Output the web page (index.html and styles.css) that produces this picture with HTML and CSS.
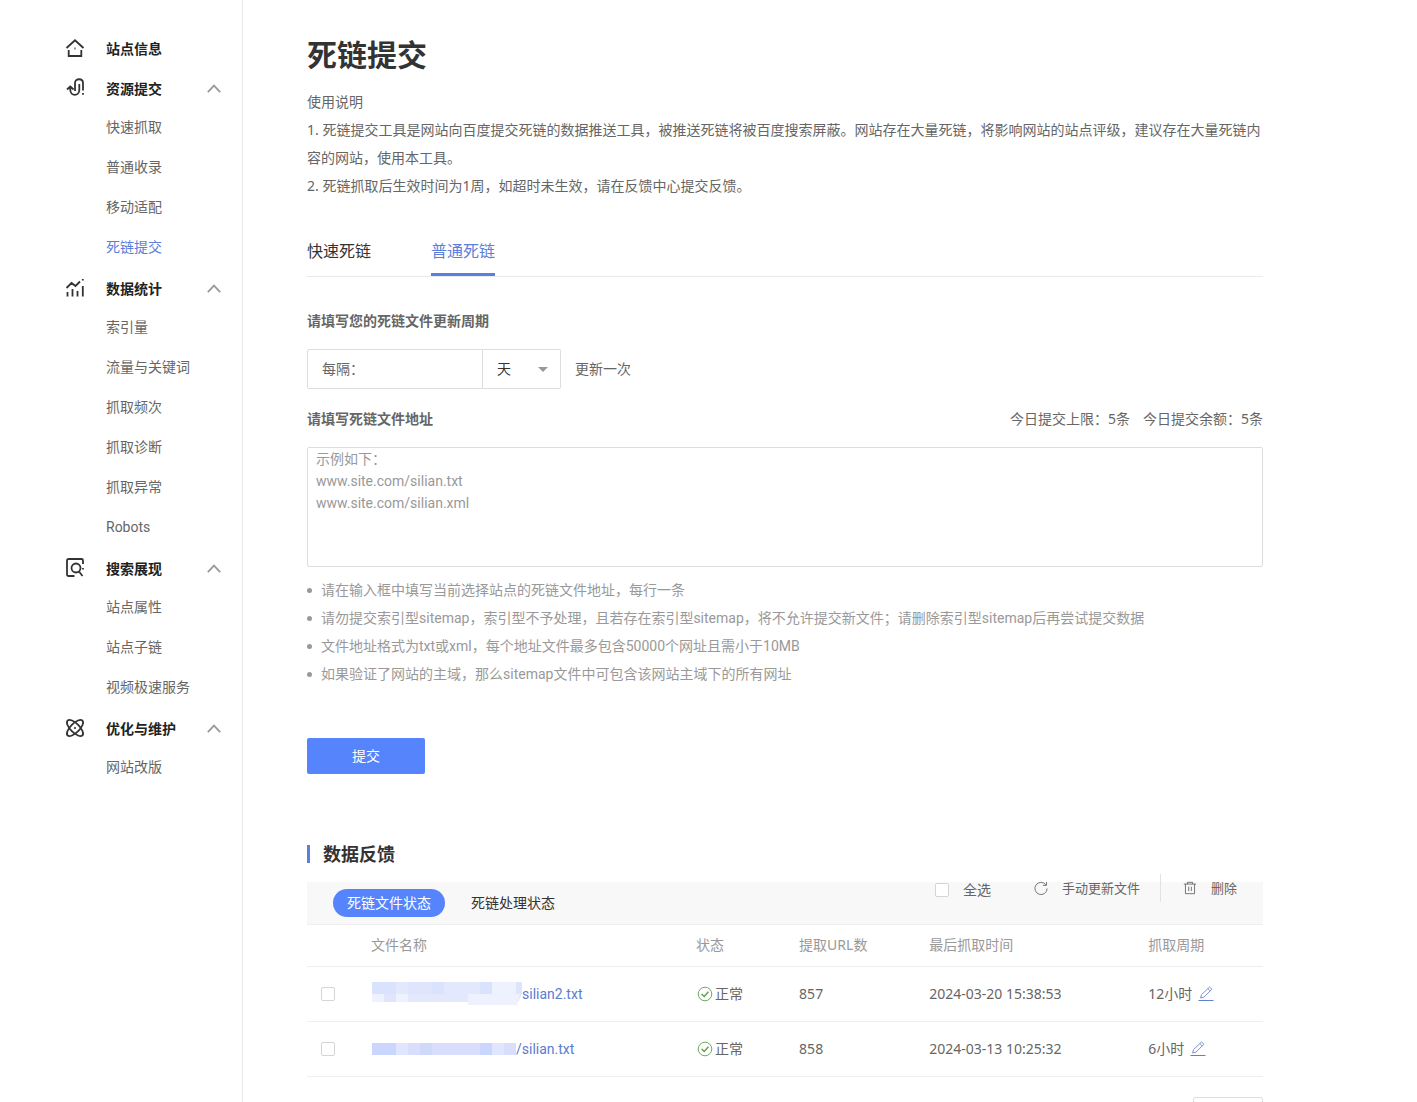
FILE: index.html
```html
<!DOCTYPE html>
<html lang="zh-CN">
<head>
<meta charset="utf-8">
<meta name="viewport" content="width=device-width, initial-scale=1">
<title>死链提交</title>
<link rel="stylesheet" href="styles.css">
</head>
<body>
<svg class="sprite" aria-hidden="true">
  <symbol id="chevron" viewBox="0 0 14 9"><path d="M.8 8.2 7 1.6l6.2 6.6" fill="none" stroke="#999" stroke-width="1.8"/></symbol>
  <symbol id="check" viewBox="0 0 16 16"><circle cx="8" cy="8" r="6.8" fill="none" stroke="#6bab5e"/><path d="m4.6 8 2.6 2.4 4.2-4.6" fill="none" stroke="#5c9d50" stroke-width="1.4"/></symbol>
  <symbol id="pencil" viewBox="0 0 16 16"><path d="M.5 14.5h15" stroke="#5f7fd4" fill="none"/><path d="m2.600 12 .9-3.400L11.500 1l2.400 2.200L6 11.100zM9.800 2.600l2.400 2.300" stroke="#7f93d6" fill="none"/></symbol>
</svg>
<div class="app">
  <nav class="sidebar" aria-label="站点管理">
    <a class="group" href="#">
      <svg class="group-icon" viewBox="0 0 20 20"><path d="M1.500 10 10 2.300l8.500 7.700M3.700 12v6h12.600v-6"/><path d="M9.500 10.500h1"/></svg>
      <span>站点信息</span>
    </a>
    <a class="group" href="#">
      <svg class="group-icon" viewBox="0 0 20 20"><path d="m2 11.500 3.300-3 3.300 3M5.300 9v3c0 6.500 9 6.500 9 0V6"/><path d="M10 13V5c0-5 8-5 8 0v7.500M18 15v1.800"/></svg>
      <span>资源提交</span>
      <svg class="chevron"><use href="#chevron"/></svg>
    </a>
    <a class="item" href="#">快速抓取</a>
    <a class="item" href="#">普通收录</a>
    <a class="item" href="#">移动适配</a>
    <a class="item current" href="#">死链提交</a>
    <a class="group" href="#">
      <svg class="group-icon" viewBox="0 0 20 20"><path d="m1.500 10 5-5 4 3L15 3.500M2.500 14v4.500M7.500 11v7.500M12.500 13v5.500M17.800 8v10.500M17.800 1v1.500"/></svg>
      <span>数据统计</span>
      <svg class="chevron"><use href="#chevron"/></svg>
    </a>
    <a class="item" href="#">索引量</a>
    <a class="item" href="#">流量与关键词</a>
    <a class="item" href="#">抓取频次</a>
    <a class="item" href="#">抓取诊断</a>
    <a class="item" href="#">抓取异常</a>
    <a class="item" href="#">Robots</a>
    <a class="group" href="#">
      <svg class="group-icon" viewBox="0 0 20 20"><path d="M9.500 18h-6a1.500 1.500 0 0 1-1.500-1.500v-14A1.500 1.500 0 0 1 3.500 1h13A1.500 1.500 0 0 1 18 2.500V6M18 10v1.500"/><circle cx="11" cy="10" r="4.500"/><path d="M14 13.500 17.500 18"/></svg>
      <span>搜索展现</span>
      <svg class="chevron"><use href="#chevron"/></svg>
    </a>
    <a class="item" href="#">站点属性</a>
    <a class="item" href="#">站点子链</a>
    <a class="item" href="#">视频极速服务</a>
    <a class="group" href="#">
      <svg class="group-icon" viewBox="0 0 20 20"><ellipse cx="10" cy="10" rx="10.500" ry="4.500" transform="rotate(45 10 10)"/><ellipse cx="10" cy="10" rx="10.500" ry="4.500" transform="rotate(-45 10 10)"/><path d="M9.200 10h1.600"/></svg>
      <span>优化与维护</span>
      <svg class="chevron"><use href="#chevron"/></svg>
    </a>
    <a class="item" href="#">网站改版</a>
  </nav>

  <main class="content">
    <h1>死链提交</h1>
    <div class="intro">
      <p>使用说明</p>
      <p>1. 死链提交工具是网站向百度提交死链的数据推送工具，被推送死链将被百度搜索屏蔽。网站存在大量死链，将影响网站的站点评级，建议存在大量死链内容的网站，使用本工具。</p>
      <p>2. 死链抓取后生效时间为1周，如超时未生效，请在反馈中心提交反馈。</p>
    </div>

    <div class="tabs">
      <button class="tab" type="button">快速死链</button>
      <button class="tab active" type="button">普通死链</button>
    </div>

    <form>
      <h2 class="field-title">请填写您的死链文件更新周期</h2>
      <div class="period">
        <div class="period-input"><label for="days">每隔：</label><input id="days" type="text"></div>
        <div class="period-unit">
          <select aria-label="周期单位"><option>天</option></select>
        </div>
        <span class="period-note">更新一次</span>
      </div>
      <div class="field-head">
        <label class="field-title" for="urls">请填写死链文件地址</label>
        <div class="quota"><span>今日提交上限：5条</span><span>今日提交余额：5条</span></div>
      </div>
      <textarea id="urls" placeholder="示例如下：&#10;www.site.com/silian.txt&#10;www.site.com/silian.xml"></textarea>
      <ul class="tips">
        <li>请在输入框中填写当前选择站点的死链文件地址，每行一条</li>
        <li>请勿提交索引型sitemap，索引型不予处理，且若存在索引型sitemap，将不允许提交新文件；请删除索引型sitemap后再尝试提交数据</li>
        <li>文件地址格式为txt或xml，每个地址文件最多包含50000个网址且需小于10MB</li>
        <li>如果验证了网站的主域，那么sitemap文件中可包含该网站主域下的所有网址</li>
      </ul>
      <button class="submit" type="button">提交</button>
    </form>

    <h2 class="section-title">数据反馈</h2>
    <div class="toolbar">
      <button class="pill active" type="button">死链文件状态</button>
      <button class="pill" type="button">死链处理状态</button>
      <div class="actions">
        <label class="select-all"><input type="checkbox">全选</label>
        <button class="action refresh" type="button">
          <svg viewBox="0 0 16 16"><path d="M13.600 4.300A7 7 0 1 0 15 8.600M14.300 1v4h-4"/></svg>手动更新文件
        </button>
        <button class="action remove" type="button">
          <svg viewBox="0 0 16 16"><path d="M1 3.500h14M5 3.500v-2h6v2M2.800 3.500v11h10.400v-11M6.500 6.500v5M9.500 6.500v5"/></svg>删除
        </button>
      </div>
    </div>
    <table>
      <colgroup><col class="c-pick"><col class="c-name"><col class="c-state"><col class="c-count"><col class="c-time"><col class="c-cycle"></colgroup>
      <thead>
        <tr><th></th><th>文件名称</th><th>状态</th><th>提取URL数</th><th>最后抓取时间</th><th>抓取周期</th></tr>
      </thead>
      <tbody>
        <tr>
          <td><input type="checkbox" aria-label="选择 silian2.txt"></td>
          <td><a class="file" href="#"><svg class="mask" width="150" height="24" viewBox="0 0 150 24" shape-rendering="crispEdges"><path fill="#e4e8fc" d="M0 0h150v12l-4 8H0z"/><path fill="#d9e3fd" d="M0 0h24v12H0zM108 0h12v12h-12zM60 0h12v12H60z"/><path fill="#e1e4fd" d="M36 0h24v12H36z"/><path fill="#eef1fe" d="M0 12h12v8H0zM24 12h12v8H24zM120 0h24v12h-24zM96 12h52l-3 11H96z"/><path fill="#dfe5fb" d="M12 12h12v8H12zM144 0h6v12h-6z"/></svg>silian2.txt</a></td>
          <td><span class="state"><svg><use href="#check"/></svg>正常</span></td>
          <td>857</td>
          <td>2024-03-20 15:38:53</td>
          <td><span class="cycle">12小时<button type="button" aria-label="编辑"><svg><use href="#pencil"/></svg></button></span></td>
        </tr>
        <tr>
          <td><input type="checkbox" aria-label="选择 silian.txt"></td>
          <td><a class="file" href="#"><svg class="mask" width="144" height="12" viewBox="0 0 144 12" shape-rendering="crispEdges"><path fill="#d8defc" d="M0 0h144v12H0z"/><path fill="#cbd6fe" d="M0 0h24v12H0zM108 0h12v12h-12z"/><path fill="#dfe6fd" d="M24 0h12v12H24zM120 0h12v12h-12z"/><path fill="#d0d9fa" d="M48 0h12v12H48z"/></svg>/silian.txt</a></td>
          <td><span class="state"><svg><use href="#check"/></svg>正常</span></td>
          <td>858</td>
          <td>2024-03-13 10:25:32</td>
          <td><span class="cycle">6小时<button type="button" aria-label="编辑"><svg><use href="#pencil"/></svg></button></span></td>
        </tr>
      </tbody>
    </table>
    <div class="pager"><select aria-label="每页条数"><option></option></select></div>
  </main>
</div>
</body>
</html>
```
FILE: styles.css
```css
* { box-sizing: border-box; }

body {
  margin: 0;
  background: #fff;
  color: #666;
  font: 14px/28px "Noto Sans", "Noto Sans CJK SC", sans-serif;
}

h1, h2, p, ul { margin: 0; padding: 0; }
a { color: inherit; text-decoration: none; }
svg { display: block; flex: none; }
button, input, select, textarea { font: inherit; color: inherit; margin: 0; }
button { padding: 0; border: 0; background: none; cursor: pointer; }
.sprite { position: absolute; width: 0; height: 0; }

.app { display: flex; height: 100vh; overflow: hidden; }

/* Sidebar */
.sidebar {
  flex: none;
  width: 243px;
  padding: 28px 21px 0 65px;
  border-right: 1px solid #e8e8e8;
}
.group {
  display: flex;
  align-items: center;
  height: 40px;
  color: #222;
  font-weight: 700;
  line-height: 40px;
}
.group span { padding-top: 1px; }
.group-icon {
  width: 20px;
  height: 20px;
  margin-right: 21px;
  overflow: visible;
  fill: none;
  stroke: #333;
  stroke-width: 1.8;
}
.chevron { width: 14px; height: 9px; margin-left: auto; }
.item { display: block; height: 40px; padding-left: 41px; line-height: 38px; }
.item.current { color: #5b7fdb; }

.item, .tips, .file, textarea { font-family: Roboto, "Noto Sans CJK SC", sans-serif; }

/* Content */
.content { flex: 1; min-width: 0; padding: 34px 154px 0 64px; }
h1 { color: #333; font-size: 30px; line-height: 42px; }
.intro { margin-top: 12px; }

.tabs { display: flex; gap: 60px; margin-top: 28px; border-bottom: 1px solid #eaeaea; }
.tab { height: 48px; border-bottom: 3px solid transparent; color: #333; font-size: 16px; }
.tab.active { border-color: #5b7fdb; color: #5b7fdb; }

form { padding-top: 30px; }
.field-title { font-size: 14px; font-weight: 700; line-height: 28px; }
.period { display: flex; align-items: center; margin-top: 14px; }
.period-input {
  display: flex;
  align-items: center;
  width: 176px;
  height: 40px;
  padding-left: 14px;
  border: 1px solid #ddd;
  border-radius: 2px 0 0 2px;
}
.period-input input { flex: 1; min-width: 0; border: 0; outline: 0; }
.period-unit { position: relative; width: 78px; }
.period-unit select {
  width: 100%;
  height: 40px;
  padding: 0 14px;
  border: 1px solid #ddd;
  border-left: 0;
  border-radius: 0 2px 2px 0;
  background: #fff;
  color: #333;
  appearance: none;
}
.period-unit::after {
  content: "";
  position: absolute;
  top: 18px;
  right: 13px;
  border: 5px solid transparent;
  border-top-color: #999;
  border-bottom: 0;
}
.period-note { margin-left: 14px; }
.field-head { display: flex; justify-content: space-between; margin-top: 16px; }
.quota { display: flex; gap: 13px; }
textarea {
  display: block;
  width: 100%;
  height: 120px;
  margin-top: 14px;
  padding: 0 8px;
  border: 1px solid #ddd;
  border-radius: 2px;
  line-height: 22px;
  resize: none;
}
textarea::placeholder { color: #999; opacity: 1; }
.tips { margin-top: 9px; color: #999; list-style: none; }
.tips li { display: flex; align-items: center; gap: 9px; }
.tips li::before {
  content: "";
  flex: none;
  width: 5px;
  height: 5px;
  border-radius: 50%;
  background: #999;
}
.submit {
  width: 118px;
  height: 36px;
  margin-top: 50px;
  border-radius: 2px;
  background: #5584fc;
  color: #fff;
}

/* Feedback */
.section-title {
  display: flex;
  align-items: center;
  gap: 13px;
  margin-top: 66px;
  color: #333;
  font-size: 18px;
}
.section-title::before { content: ""; width: 3px; height: 18px; background: #5b7fdb; }
.toolbar {
  display: flex;
  align-items: center;
  height: 43px;
  margin-top: 14px;
  padding: 0 26px;
  border-bottom: 1px solid #eee;
  background: #f8f8f8;
}
.pill { height: 28px; padding: 0 14px; border-radius: 14px; color: #333; }
.pill.active { margin-right: 12px; background: #5584fc; color: #fff; }
.actions {
  display: flex;
  align-items: center;
  align-self: flex-start;
  height: 28px;
  margin: -8px 0 0 auto;
}
.select-all { display: flex; align-items: center; gap: 14px; margin: 4px 43px 0 0; }
input[type="checkbox"] {
  display: block;
  width: 14px;
  height: 14px;
  border: 1px solid #d5d5d5;
  border-radius: 2px;
  background: #fff;
  appearance: none;
}
.action { display: flex; align-items: center; gap: 14px; height: 28px; font-size: 13px; }
.action svg { width: 14px; height: 14px; fill: none; stroke: #666; }
.refresh { padding-right: 20px; border-right: 1px solid #e2e2e2; }
.remove { padding-left: 22px; }

table { width: 100%; border-collapse: collapse; table-layout: fixed; }
th, td { height: 55px; padding: 0; border-bottom: 1px solid #eee; text-align: left; }
th { height: 41px; color: #999; font-weight: 400; line-height: 20px; }
td:first-child { padding-left: 14px; }
.c-pick { width: 64px; }
.c-name { width: 34%; }
.c-state { width: 103px; }
.c-count { width: 130px; }
.c-time { width: 219px; }
.c-cycle { width: 12%; }
.file { display: flex; align-items: center; color: #5b7bd0; }
.mask { margin-left: 1px; }
.state { display: flex; align-items: center; gap: 2px; }
.state svg { width: 16px; height: 16px; margin-left: 1px; }
.cycle { display: flex; align-items: center; gap: 6px; }
.cycle svg { width: 16px; height: 16px; }

.pager { display: flex; justify-content: flex-end; margin-top: 20px; }
.pager select {
  width: 70px;
  height: 32px;
  border: 1px solid #ddd;
  border-radius: 2px;
  background: #fff;
  appearance: none;
}
```
